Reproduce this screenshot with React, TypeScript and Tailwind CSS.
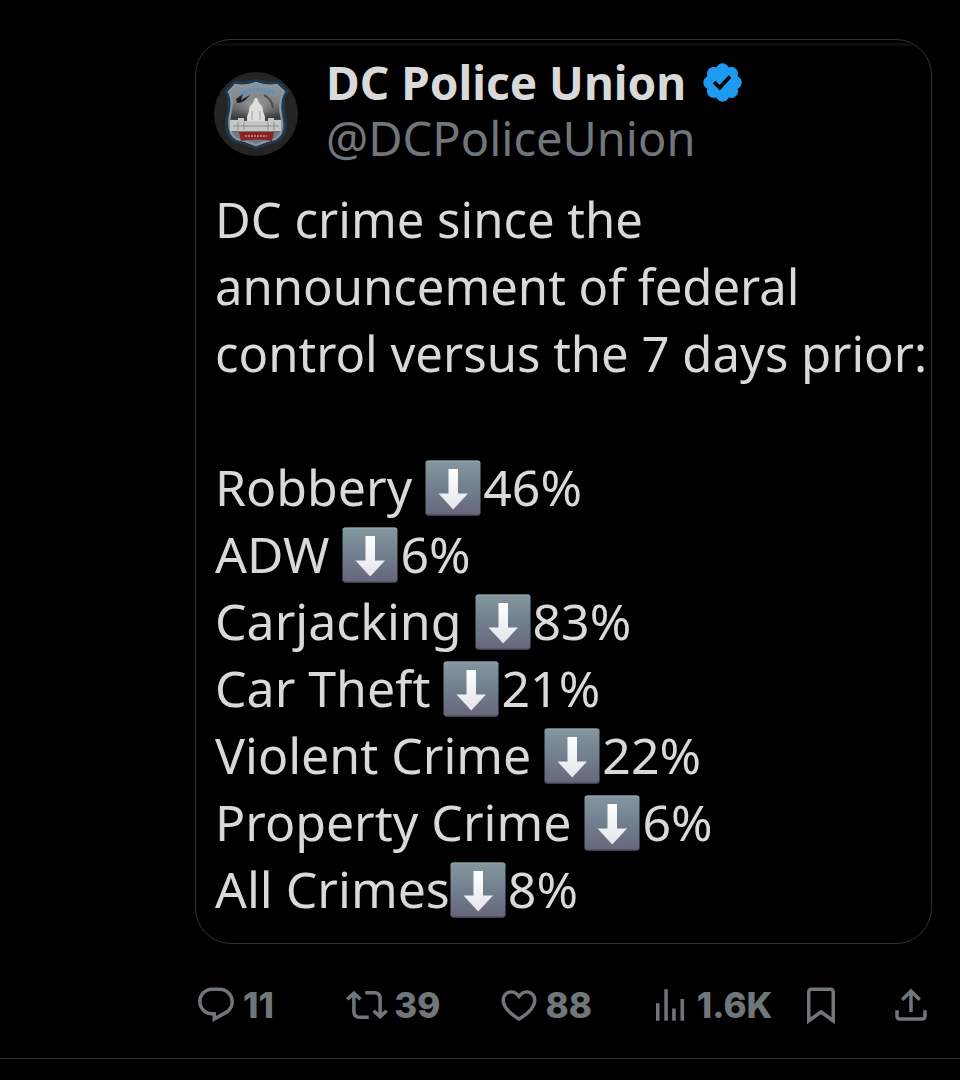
import type { ReactNode } from "react";

const ICONS = {
  reply:
    "M1.751 10c0-4.42 3.584-8 8.005-8h4.366c4.49 0 8.129 3.64 8.129 8.13 0 2.96-1.607 5.68-4.196 7.11l-8.054 4.46v-3.69h-.067c-4.49.1-8.183-3.51-8.183-8.01zm8.005-6c-3.317 0-6.005 2.69-6.005 6 0 3.37 2.77 6.08 6.138 6.01l.351-.01h1.761v2.3l5.087-2.81c1.951-1.08 3.163-3.13 3.163-5.36 0-3.39-2.744-6.13-6.129-6.13H9.756z",
  repost:
    "M4.5 3.88l4.432 4.14-1.364 1.46L5.5 7.55V16c0 1.1.896 2 2 2H13v2H7.5c-2.209 0-4-1.79-4-4V7.55L1.432 9.48.068 8.02 4.5 3.88zM16.5 6H11V4h5.5c2.209 0 4 1.79 4 4v8.45l2.068-1.93 1.364 1.46-4.432 4.14-4.432-4.14 1.364-1.46 2.068 1.93V8c0-1.1-.896-2-2-2z",
  like:
    "M16.697 5.5c-1.222-.06-2.679.51-3.89 2.16l-.805 1.09-.806-1.09C9.984 6.01 8.526 5.44 7.304 5.5c-1.243.07-2.349.78-2.91 1.91-.552 1.12-.633 2.78.479 4.82 1.074 1.97 3.257 4.27 7.129 6.61 3.87-2.34 6.052-4.64 7.126-6.61 1.111-2.04 1.03-3.7.477-4.82-.561-1.13-1.666-1.84-2.908-1.91zm4.187 7.69c-1.351 2.48-4.001 5.12-8.379 7.67l-.503.3-.504-.3c-4.379-2.55-7.029-5.19-8.382-7.67-1.36-2.5-1.41-4.86-.514-6.67.887-1.79 2.647-2.91 4.601-3.01 1.651-.09 3.368.56 4.798 2.01 1.429-1.45 3.146-2.1 4.796-2.01 1.954.1 3.714 1.22 4.601 3.01.896 1.81.846 4.17-.514 6.67z",
  views:
    "M8.75 21V3h2v18h-2zM18 21V8.5h2V21h-2zM4 21l.004-10h2L6 21H4zm9.248 0v-7h2v7h-2z",
  bookmark:
    "M4 4.5C4 3.12 5.119 2 6.5 2h11C18.881 2 20 3.12 20 4.5v18.44l-8-5.71-8 5.71V4.5zM6.5 4c-.276 0-.5.22-.5.5v14.56l6-4.29 6 4.29V4.5c0-.28-.224-.5-.5-.5h-11z",
  share:
    "M12 2.59l5.7 5.7-1.41 1.42L13 6.41V16h-2V6.41l-3.3 3.3-1.41-1.42L12 2.59zM21 15l-.02 3.51c0 1.38-1.12 2.49-2.5 2.49H5.5C4.11 21 3 19.88 3 18.5V15h2v3.5c0 .28.22.5.5.5h12.98c.28 0 .5-.22.5-.5L19 15h2z",
  verified:
    "M22.25 12c0-1.43-.88-2.67-2.19-3.34.46-1.39.2-2.9-.81-3.91s-2.52-1.27-3.91-.81c-.66-1.31-1.91-2.19-3.34-2.19s-2.67.88-3.33 2.19c-1.4-.46-2.91-.2-3.92.81s-1.26 2.52-.8 3.91c-1.31.67-2.2 1.91-2.2 3.34s.89 2.67 2.2 3.34c-.46 1.39-.21 2.9.8 3.91s2.52 1.26 3.91.81c.67 1.31 1.91 2.19 3.34 2.19s2.68-.88 3.34-2.19c1.39.45 2.9.2 3.91-.81s1.27-2.52.81-3.91c1.31-.67 2.19-1.91 2.19-3.34zm-11.71 4.2L6.8 12.46l1.41-1.42 2.26 2.26 4.8-5.23 1.47 1.36-6.2 6.77z",
};

const stats = [
  { label: "Robbery ", value: "46%" },
  { label: "ADW ", value: "6%" },
  { label: "Carjacking ", value: "83%" },
  { label: "Car Theft ", value: "21%" },
  { label: "Violent Crime ", value: "22%" },
  { label: "Property Crime ", value: "6%" },
  { label: "All Crimes", value: "8%" },
];

const Icon = ({ path }: { path: string }) => (
  <svg viewBox="0 0 24 24" className="size-[42px] shrink-0 fill-current" aria-hidden="true">
    <path d={path} />
  </svg>
);

const DownArrow = () => (
  <svg viewBox="0 0 56 56" className="mr-0.5 size-14 shrink-0" role="img" aria-label="down">
    <defs>
      <linearGradient id="tile" x1="0" y1="0" x2="0" y2="1">
        <stop offset="0" stopColor="#84979f" />
        <stop offset="0.5" stopColor="#717f8e" />
        <stop offset="1" stopColor="#66667a" />
      </linearGradient>
      <linearGradient id="arrow" x1="0" y1="0" x2="0" y2="1">
        <stop offset="0" stopColor="#ffffff" />
        <stop offset="1" stopColor="#e4e6ec" />
      </linearGradient>
    </defs>
    <rect x="0.5" y="0.5" width="55" height="55" rx="3" fill="url(#tile)" />
    <path d="M1 3Q1 1 3 1H53Q55 1 55 3" fill="none" stroke="#9db0b6" strokeWidth="1" opacity="0.7" />
    <path d="M1 53Q1 55 3 55H53Q55 55 55 53" fill="none" stroke="#4b4b5c" strokeWidth="1" />
    <path d="M23.5 9H33V33.500H43L28.200 49.500L13.500 33.500H23.500Z" fill="url(#arrow)" />
  </svg>
);

const Avatar = () => (
  <svg viewBox="0 0 84 84" className="mt-[26px] size-[84px] shrink-0" role="img" aria-label="DC Police Union">
    <defs>
      <linearGradient id="shield" x1="0" y1="0" x2="0" y2="1">
        <stop offset="0" stopColor="#8d999f" />
        <stop offset="0.3" stopColor="#85878a" />
        <stop offset="0.55" stopColor="#3a3d40" />
        <stop offset="0.8" stopColor="#777b80" />
        <stop offset="1" stopColor="#61717c" />
      </linearGradient>
      <radialGradient id="glow">
        <stop offset="0" stopColor="#a8a8a8" />
        <stop offset="1" stopColor="#777" stopOpacity="0" />
      </radialGradient>
      <filter id="soft">
        <feGaussianBlur stdDeviation="0.7" />
      </filter>
    </defs>
    <circle cx="42" cy="42" r="42" fill="#252425" />
    <g filter="url(#soft)">
      <path
        d="M21 10Q30 13 42 8Q54 13 63 10L73 19Q67 28 70 42Q75 62 63 69Q52 71 42 76Q32 71 21 69Q9 62 14 42Q17 28 12 19Z"
        fill="url(#shield)"
        stroke="#23394b"
        strokeWidth="3"
      />
      <path
        d="M21 13Q31 15 42 11Q53 15 63 13L70 20Q64 29 67 43Q71 61 61 67Q51 69 42 73Q33 69 23 67Q13 61 16 43Q20 29 15 20Z"
        fill="none"
        stroke="#8799a5"
        strokeWidth="2"
      />
      <ellipse cx="42" cy="34" rx="24" ry="15" fill="url(#glow)" />
      <path d="M27 22Q42 14 60 21" fill="none" stroke="#5f8fb8" strokeWidth="4" strokeDasharray="3 1" />
      <path d="M22 27L29 22L27 28L36 23Q29 32 23 31Z" fill="#1c2329" />
      <path d="M50 23Q58 27 59 36" fill="none" stroke="#4d4f52" strokeWidth="2" />
      <path d="M41 26H43L45 31Q49 34 49 39L51 45V50H33V45L35 39Q35 34 39 31Z" fill="#dededc" />
      <path d="M16 48H24V46H30V49H54V46H60V48H67V59H16Z" fill="#c6c6c4" />
      <path d="M19 54H65M24 50V58M30 50V58M54 50V58M60 50V58" stroke="#8b8b8a" strokeWidth="1" />
      <path d="M38 39V48M46 39V48" stroke="#a3a3a1" strokeWidth="1" />
      <path d="M25 60H60L58 69Q42 66 27 69Z" fill="#8a2328" />
      <path d="M31 64H53" stroke="#b07878" strokeWidth="2" strokeDasharray="2 1" />
    </g>
  </svg>
);

const Action = ({ path, label, children }: { path: string; label: string; children?: ReactNode }) => (
  <button type="button" aria-label={label} className="flex items-center gap-1.5">
    <Icon path={path} />
    {children}
  </button>
);

const Post = () => (
  <article className="overflow-hidden rounded-[36px] border border-[#2f3336] bg-black pb-5 text-[#d9d9d9]">
    <div className="mt-[3px] h-[3px] bg-[#0d0d0d]" />
    <header className="flex gap-7 pl-[18px]">
      <Avatar />
      <div className="pt-2">
        <div className="flex items-center gap-3.5">
          <h1 className="text-[46px] leading-[56px] font-bold whitespace-nowrap">DC Police Union</h1>
          <svg viewBox="0 0 24 24" className="size-[45px] shrink-0 fill-[#1d9bf0]" role="img" aria-label="Verified">
            <path d={ICONS.verified} />
          </svg>
        </div>
        <a href="#" className="block text-[47px] leading-[56px] text-[#71767b]">
          @DCPoliceUnion
        </a>
      </div>
    </header>
    <div className="pt-5 pl-[19px] leading-[67px]">
      <p className="text-[49px] whitespace-nowrap">
        DC crime since the
        <br />
        announcement of federal
        <br />
        control versus the 7 days prior:
      </p>
      <ul className="mt-[67px] text-[50px]">
        {stats.map((stat) => (
          <li key={stat.label} className="flex items-center whitespace-pre">
            {stat.label}
            <DownArrow />
            {stat.value}
          </li>
        ))}
      </ul>
    </div>
  </article>
);

const App = () => {
  return (
    <div className="min-h-screen bg-black font-['Noto_Sans',sans-serif]">
      <main className="border-b border-[#2f3336] pt-[39px] pr-7 pb-8 pl-[195px]">
        <Post />
        <div className="mt-10 flex items-center font-['Inter',sans-serif] text-[35px] leading-[42px] font-extrabold text-[#71767b]">
          <div className="flex-1">
            <Action path={ICONS.reply} label="Reply">11</Action>
          </div>
          <div className="flex-1">
            <Action path={ICONS.repost} label="Repost">39</Action>
          </div>
          <div className="flex-1">
            <Action path={ICONS.like} label="Like">88</Action>
          </div>
          <div className="flex-1">
            <Action path={ICONS.views} label="Views">1.6K</Action>
          </div>
          <div className="flex gap-12">
            <Action path={ICONS.bookmark} label="Bookmark" />
            <Action path={ICONS.share} label="Share" />
          </div>
        </div>
      </main>
    </div>
  );
};

export default App;
